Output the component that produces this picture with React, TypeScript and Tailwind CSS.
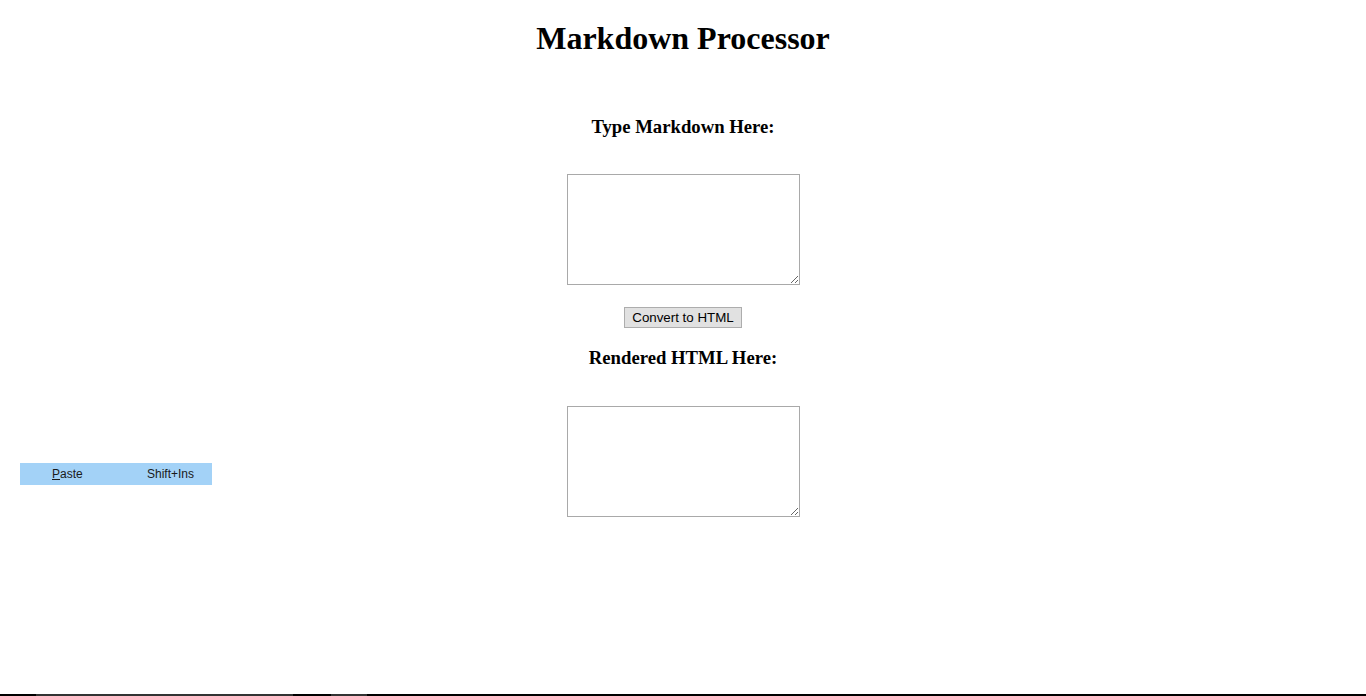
export default function App() {
  return (
    <div className="relative flex h-[696px] flex-col bg-white">
      <div className="flex flex-col items-center font-['Liberation_Serif',serif] text-black">
        <h1 className="mt-[20px] text-[32px] font-bold leading-[37px]">Markdown Processor</h1>

        <h3 className="mt-[59px] text-[18.72px] font-bold leading-[22px]">Type Markdown Here:</h3>
        <textarea className="mt-[36px] block h-[111px] w-[233px] resize border border-[#a9a9a9] bg-white p-[2px] font-['Liberation_Mono',monospace] text-[13.33px] outline-none" />

        <button className="mt-[22px] h-[21px] w-[118px] border border-[#adadad] bg-[#e1e1e1] font-['Liberation_Sans',Arial,sans-serif] text-[13.33px] leading-[19px] text-black">
          Convert to HTML
        </button>

        <h3 className="mt-[19px] text-[18.72px] font-bold leading-[22px]">Rendered HTML Here:</h3>
        <textarea className="mt-[37px] block h-[111px] w-[233px] resize border border-[#a9a9a9] bg-white p-[2px] font-['Liberation_Mono',monospace] text-[13.33px] outline-none" />
      </div>

      {/* context menu item left over from a right-click */}
      <div className="absolute left-[20px] top-[463px] flex h-[22px] w-[192px] items-center bg-[#a3d2f7] font-['Liberation_Sans',Arial,sans-serif] text-[12px] text-[#1a1a1a]">
        <span className="ml-[32px]">
          <span className="underline">P</span>aste
        </span>
        <span className="ml-auto mr-[18px]">Shift+Ins</span>
      </div>

      {/* bottom edge */}
      <div className="mt-auto flex h-[2px] w-full bg-black">
        <div className="w-[36px]" />
        <div className="w-[257px] bg-[#333333]" />
        <div className="w-[38px]" />
        <div className="w-[36px] bg-[#333333]" />
      </div>
    </div>
  );
}
